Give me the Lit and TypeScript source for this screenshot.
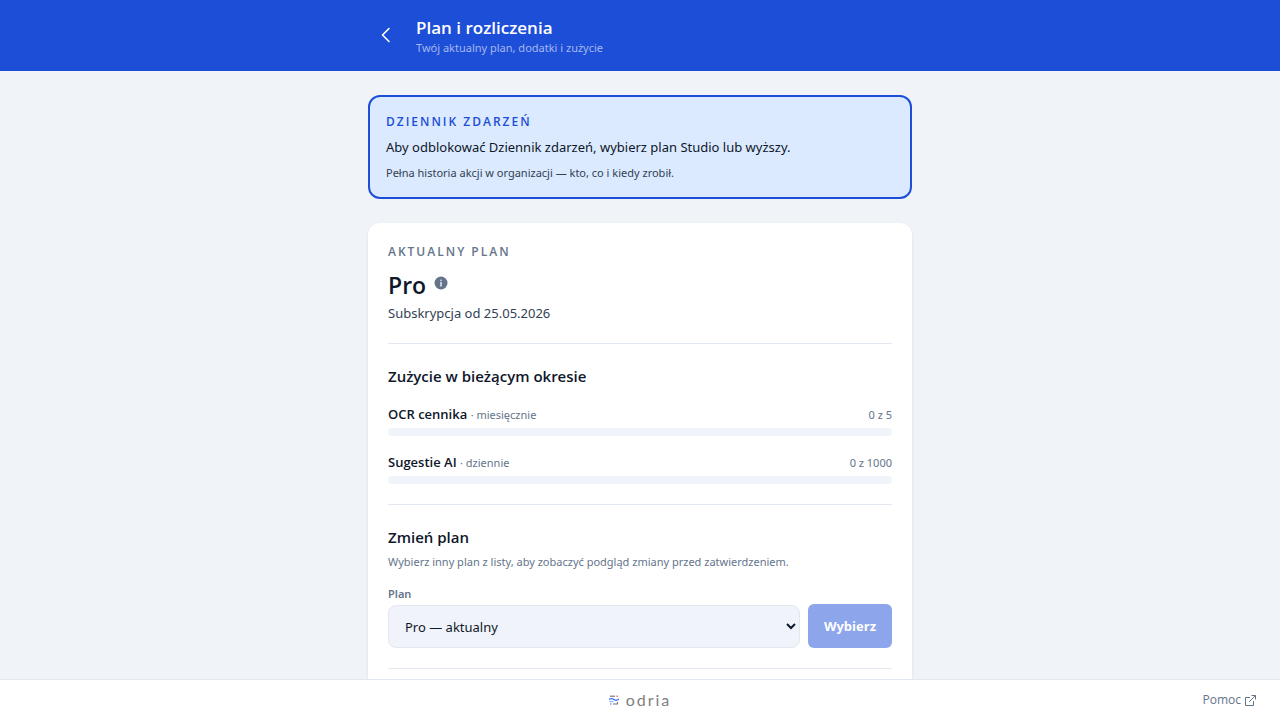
import { LitElement, html, css, svg } from "lit";
import { customElement, property, state } from "lit/decorators.js";

interface Usage {
  id: string;
  name: string;
  period: string;
  used: number;
  limit: number;
}

const chevronLeft = svg`<path d="M13 3.500 6.500 10l6.500 6.500" fill="none" stroke="currentColor" stroke-width="1.600" stroke-linecap="round" stroke-linejoin="round"/>`;

@customElement("usage-meter")
export class UsageMeter extends LitElement {
  @property({ attribute: false }) usage!: Usage;

  static styles = css`
    :host {
      display: block;
    }
    .row {
      display: flex;
      justify-content: space-between;
      align-items: baseline;
      height: 20px;
      line-height: 20px;
      margin-bottom: 4px;
    }
    .name {
      font-family: "Open Sans", sans-serif;
      font-size: 13px;
      font-weight: 600;
      color: #0f172a;
    }
    .meta {
      font-size: 11px;
      color: #64748b;
    }
    .track {
      height: 8px;
      border-radius: 4px;
      background: #f0f3f9;
      overflow: hidden;
    }
    .fill {
      height: 100%;
      background: #1d4ed8;
    }
  `;

  render() {
    const { id, name, period, used, limit } = this.usage;
    return html`
      <div class="row">
        <span>
          <span class="name" id=${id}>${name}</span>
          <span class="meta">· ${period}</span>
        </span>
        <span class="meta">${used} z ${limit}</span>
      </div>
      <div
        class="track"
        role="progressbar"
        aria-labelledby=${id}
        aria-valuenow=${used}
        aria-valuemax=${limit}
      >
        <div class="fill" style="width:${(used / limit) * 100}%"></div>
      </div>
    `;
  }
}

@customElement("app-root")
export class AppRoot extends LitElement {
  @state() private usages: Usage[] = [
    { id: "ocr", name: "OCR cennika", period: "miesięcznie", used: 0, limit: 5 },
    { id: "ai", name: "Sugestie AI", period: "dziennie", used: 0, limit: 1000 },
  ];

  static styles = css`
    :host {
      display: flex;
      flex-direction: column;
      height: 100vh;
      font-family: "Noto Sans", sans-serif;
      font-size: 13px;
      line-height: 20px;
      color: #0f172a;
      background: #f0f4f9;
    }
    * {
      box-sizing: border-box;
    }
    h1,
    h2,
    p {
      margin: 0;
    }
    .top {
      flex: none;
      background: #1d4ed8;
      color: #fff;
    }
    .wrap {
      max-width: 576px;
      margin: 0 auto;
      padding: 0 16px;
    }
    .bar {
      display: flex;
      align-items: center;
      gap: 12px;
      padding-top: 16px;
      padding-bottom: 15px;
    }
    .back {
      display: grid;
      place-items: center;
      width: 36px;
      height: 36px;
      padding: 0;
      border: 0;
      border-radius: 8px;
      background: none;
      color: inherit;
    }
    .title,
    .heading,
    .plan-name,
    .eyebrow,
    .submit {
      font-family: "Open Sans", sans-serif;
      font-weight: 600;
    }
    .title {
      font-size: 17px;
      line-height: 24px;
    }
    .subtitle {
      font-size: 11px;
      line-height: 16px;
      color: #a5b8ef;
    }
    .scroll {
      flex: 1;
      min-height: 0;
      overflow-y: auto;
      scrollbar-width: none;
    }
    .stack {
      display: grid;
      gap: 24px;
      padding-top: 24px;
      padding-bottom: 24px;
    }
    .notice {
      display: grid;
      gap: 6px;
      padding: 16px;
      border: 2px solid #1d4ed8;
      border-radius: 12px;
      background: #dbeafe;
    }
    .eyebrow {
      font-size: 12px;
      line-height: 18px;
      letter-spacing: 2px;
      text-transform: uppercase;
      color: #64748b;
    }
    .accent {
      color: #1d4ed8;
    }
    .small {
      font-size: 11px;
      line-height: 18px;
      color: #64748b;
    }
    .soft {
      color: #334155;
    }
    .detail {
      margin-top: 2px;
      line-height: 16px;
    }
    .card {
      padding: 0 20px 20px;
      border-radius: 12px;
      background: #fff;
      box-shadow: 0 1px 3px rgba(15, 23, 42, 0.1);
    }
    .section {
      padding: 20px 0;
      border-bottom: 1px solid #e2e8f0;
    }
    .plan {
      display: flex;
      align-items: center;
      gap: 8px;
      margin: 8px 0 2px;
    }
    .plan-name {
      font-size: 23px;
      line-height: 32px;
    }
    .info {
      display: grid;
      padding: 0 0 4px;
      border: 0;
      background: none;
      color: #64748b;
    }
    .heading {
      font-size: 15px;
      line-height: 24px;
    }
    .meters {
      display: grid;
      gap: 16px;
      margin-top: 16px;
    }
    .hint {
      margin-top: 4px;
    }
    .form {
      display: flex;
      align-items: flex-end;
      gap: 8px;
      margin-top: 15px;
    }
    .field {
      display: grid;
      flex: 1;
      gap: 3px;
    }
    .label {
      font-size: 11px;
      line-height: 16px;
      font-weight: 600;
      color: #64748b;
    }
    .select {
      width: 100%;
      height: 43px;
      padding: 0 12px;
      border: 1px solid #e2e8f0;
      border-radius: 8px;
      background: #f0f3f9;
      color: #0f172a;
      font: inherit;
    }
    .submit {
      height: 44px;
      padding: 0 16px;
      border: 0;
      border-radius: 6px;
      background: #1d4ed8;
      color: #fff;
      font-size: 13px;
      font-weight: 700;
      opacity: 0.5;
    }
    .foot {
      flex: none;
      display: grid;
      grid-template-columns: 1fr auto 1fr;
      align-items: center;
      height: 41px;
      padding: 0 24px;
      border-top: 1px solid #e2e8f0;
      background: #fff;
    }
    .brand {
      grid-column: 2;
      display: flex;
      align-items: center;
      gap: 7px;
      color: #808080;
      font-family: Lato, sans-serif;
      font-size: 16px;
      line-height: 20px;
      letter-spacing: 2px;
      text-decoration: none;
    }
    .help {
      justify-self: end;
      display: flex;
      align-items: center;
      gap: 4px;
      color: #64748b;
      font-family: "Open Sans", sans-serif;
      font-size: 12px;
      line-height: 16px;
      text-decoration: none;
    }
  `;

  render() {
    return html`
      <header class="top">
        <div class="wrap bar">
          <button class="back" type="button" aria-label="Wstecz">
            <svg width="20" height="22" viewBox="0 0 20 22">${chevronLeft}</svg>
          </button>
          <div>
            <h1 class="title">Plan i rozliczenia</h1>
            <p class="subtitle">Twój aktualny plan, dodatki i zużycie</p>
          </div>
        </div>
      </header>

      <main class="scroll">
        <div class="wrap stack">
          <section class="notice">
            <p class="eyebrow accent">Dziennik zdarzeń</p>
            <p>Aby odblokować Dziennik zdarzeń, wybierz plan Studio lub wyższy.</p>
            <p class="small soft detail">Pełna historia akcji w organizacji — kto, co i kiedy zrobił.</p>
          </section>

          <div class="card">
            <section class="section">
              <p class="eyebrow">Aktualny plan</p>
              <div class="plan">
                <h2 class="plan-name">Pro</h2>
                <button class="info" type="button" aria-label="Informacje o planie">
                  <svg width="14" height="14" viewBox="0 0 14 14">
                    <circle cx="7" cy="7" r="6.500" fill="currentColor" />
                    <circle cx="7" cy="4.300" r="0.800" fill="#fff" />
                    <path d="M7 6V10.500" fill="none" stroke="#fff" stroke-width="1.300" />
                  </svg>
                </button>
              </div>
              <p class="soft">Subskrypcja od 25.05.2026</p>
            </section>

            <section class="section">
              <h2 class="heading">Zużycie w bieżącym okresie</h2>
              <div class="meters">
                ${this.usages.map((u) => html`<usage-meter .usage=${u}></usage-meter>`)}
              </div>
            </section>

            <section class="section">
              <h2 class="heading">Zmień plan</h2>
              <p class="small hint">
                Wybierz inny plan z listy, aby zobaczyć podgląd zmiany przed zatwierdzeniem.
              </p>
              <form class="form">
                <div class="field">
                  <label class="label" for="plan">Plan</label>
                  <select class="select" id="plan">
                    <option>Pro — aktualny</option>
                  </select>
                </div>
                <button class="submit" type="button" disabled>Wybierz</button>
              </form>
            </section>
          </div>
        </div>
      </main>

      <footer class="foot">
        <a class="brand" href="#">
          <svg width="10" height="10" viewBox="0 0 10 10" fill="none" stroke-width="1.200">
            <path d="M1 1.200H6" stroke="#777" />
            <path d="M7.500 1.200H9" stroke="#ff6b5e" stroke-width="1.600" />
            <path d="M0 4.500C2 3 3.500 3.300 5 4.500S8 5.700 10 4" stroke="#3b6ff6" />
            <path d="M0.500 7C2 6 3 6.200 4.500 7" stroke="#8fb0fa" />
            <path d="M1 9H2.500" stroke="#3b6ff6" />
            <path d="M4 9H8.500V7" stroke="#777" />
          </svg>
          <span>odria</span>
        </a>
        <a class="help" href="#">
          Pomoc
          <svg width="11" height="11" viewBox="0 0 11 11" fill="none" stroke="currentColor" stroke-width="1">
            <path d="M5 2.500H0.500V10.500H8.500V6M6.500 0.500H10.500V4.500M10.500 0.500 4 7" />
          </svg>
        </a>
      </footer>
    `;
  }
}
